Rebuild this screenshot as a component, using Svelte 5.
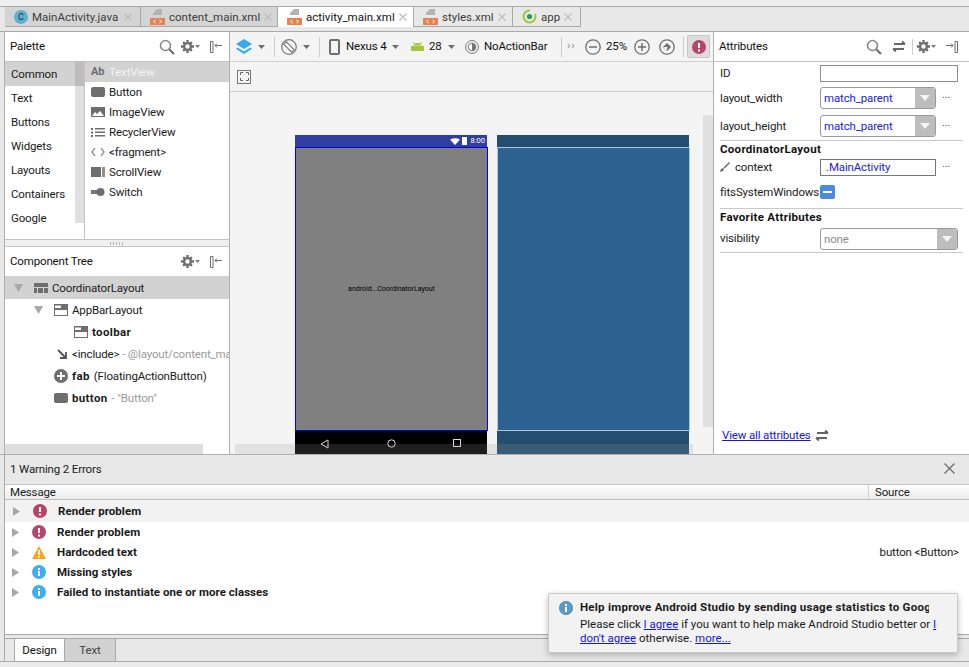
<script>
  const tabs = [
    { name: 'MainActivity.java', icon: 'c', w: 136 },
    { name: 'content_main.xml', icon: 'xml', w: 137 },
    { name: 'activity_main.xml', icon: 'xml', w: 136, active: true },
    { name: 'styles.xml', icon: 'xml', w: 99 },
    { name: 'app', icon: 'app', w: 68 },
  ];
  const categories = ['Common', 'Text', 'Buttons', 'Widgets', 'Layouts', 'Containers', 'Google'];
  const widgets = [
    { name: 'Button', icon: 'button' },
    { name: 'ImageView', icon: 'image' },
    { name: 'RecyclerView', icon: 'list' },
    { name: '<fragment>', icon: 'code' },
    { name: 'ScrollView', icon: 'scroll' },
    { name: 'Switch', icon: 'switch' },
  ];
  const messages = [
    { text: 'Render problem', kind: 'error', selected: true },
    { text: 'Render problem', kind: 'error' },
    { text: 'Hardcoded text', kind: 'warn', source: 'button <Button>' },
    { text: 'Missing styles', kind: 'info' },
    { text: 'Failed to instantiate one or more classes', kind: 'info' },
  ];
</script>

{#snippet caret()}
  <svg class="caret" width="7" height="4" viewBox="0 0 7 4"><path d="M0 0h7L3.500 4z" fill="#6e6e6e" /></svg>
{/snippet}

{#snippet gear()}
  <span class="gear">
    <svg width="13" height="13" viewBox="0 0 13 13"><circle cx="6.500" cy="6.500" r="3.400" fill="none" stroke="#6e6e6e" stroke-width="2.400" /><path d="M5.300 0h2.400v2.500H5.300zM5.300 10.500h2.400V13H5.300zM0 5.300h2.500v2.400H0zM10.500 5.300H13v2.400h-2.500zM1.300 3l1.700-1.700 1.600 1.600L2.900 4.600zM8.400 10.100l1.700-1.700 1.600 1.600-1.700 1.700zM1.300 10l1.600-1.600 1.700 1.700L3 11.700zM8.400 2.900L10 1.300 11.700 3l-1.600 1.600z" fill="#6e6e6e" /></svg>
    <svg width="5" height="3" viewBox="0 0 5 3"><path d="M0 0h5L2.500 3z" fill="#7a7a7a" /></svg>
  </span>
{/snippet}

{#snippet search()}
  <svg width="16" height="16" viewBox="0 0 16 16"><circle cx="6.500" cy="6.500" r="5" fill="none" stroke="#8a8a8a" stroke-width="1.600" /><path d="M10.200 10.200L15 15" stroke="#6e6e6e" stroke-width="2.200" /></svg>
{/snippet}

{#snippet hide()}
  <svg width="12" height="12" viewBox="0 0 12 12"><path d="M0.500 0.500h2.500v11H0.500z" fill="none" stroke="#6e6e6e" /><path d="M5 4.500h7M5 4.500l2-2M5 4.500l2 2" fill="none" stroke="#6e6e6e" /></svg>
{/snippet}

{#snippet swap()}
  <svg width="14" height="11" viewBox="0 0 14 11"><path d="M1 8h11M1 8l3 2.500M13 3H2M13 3l-3-2.500" fill="none" stroke="#666" stroke-width="1.800" /></svg>
{/snippet}

{#snippet tabIcon(kind)}
  {#if kind === 'c'}
    <span class="class-icon">C</span>
  {:else if kind === 'xml'}
    <svg width="15" height="16" viewBox="0 0 15 16"><path d="M7 0h5v6H3V4z" fill="#b3b3b3" /><rect y="9" width="15" height="7" fill="#e98150" /><path d="M5.500 11l-2 1.500 2 1.500M9.500 11l2 1.500-2 1.500" fill="none" stroke="#fff" /></svg>
  {:else}
    <svg width="15" height="15" viewBox="0 0 15 15"><circle cx="7.500" cy="7.500" r="6" fill="none" stroke="#a4c639" stroke-width="2" stroke-dasharray="28 6" /><circle cx="7.500" cy="7.500" r="2.600" fill="#1f9e5a" /></svg>
  {/if}
{/snippet}

{#snippet widgetIcon(kind)}
  <svg width="14" height="12" viewBox="0 0 14 12">
    {#if kind === 'button'}
      <rect y="1" width="14" height="10" rx="2" fill="#6e6e6e" />
    {:else if kind === 'image'}
      <rect y="1" width="14" height="10" fill="#6e6e6e" /><path d="M1 10l3-4 2 2 3-3 4 5z" fill="#fff" />
    {:else if kind === 'list'}
      <path d="M0 2h2v2H0zM4 2h10v1.500H4zM0 5.500h2v2H0zM4 5.500h10V7H4zM0 9h2v2H0zM4 9h10v1.500H4z" fill="#6e6e6e" />
    {:else if kind === 'code'}
      <path d="M4 2L1 6l3 4M10 2l3 4-3 4" fill="none" stroke="#777" stroke-width="1.200" />
    {:else if kind === 'scroll'}
      <path d="M0 1h10v10H0z" fill="#6e6e6e" /><path d="M11 1h3v10h-3z" fill="#8e8e8e" />
    {:else}
      <rect y="4" width="6" height="4" fill="#777" /><circle cx="9.500" cy="6" r="4" fill="#6e6e6e" />
    {/if}
  </svg>
{/snippet}

{#snippet msgIcon(kind)}
  {#if kind === 'error'}
    <svg width="14" height="14" viewBox="0 0 14 14"><circle cx="7" cy="7" r="7" fill="#b9446a" /><path d="M6 3h2v5H6zM6 9.500h2v2H6z" fill="#fff" /></svg>
  {:else if kind === 'warn'}
    <svg width="14" height="13" viewBox="0 0 14 13"><path d="M7 0l7 13H0z" fill="#f6a623" /><path d="M6.200 4h1.600v5H6.200zM6.200 10h1.600v1.600H6.200z" fill="#fff" /></svg>
  {:else}
    <svg width="14" height="14" viewBox="0 0 14 14"><circle cx="7" cy="7" r="7" fill="#40aef0" /><path d="M6 3h2v2H6zM6 6h2v5H6z" fill="#fff" /></svg>
  {/if}
{/snippet}

<div class="ide">
  <div class="topstrip"></div>
  <div class="tabs">
    {#each tabs as t}
      <div class="tab" class:active={t.active} style="width: {t.w}px">
        {@render tabIcon(t.icon)}
        <span>{t.name}</span>
        <svg class="x" width="8" height="8" viewBox="0 0 8 8"><path d="M0.500 0.500l7 7M7.500 0.500l-7 7" stroke="#bdbdbd" stroke-width="1.200" /></svg>
      </div>
    {/each}
  </div>

  <div class="work">
    <div class="left">
      <section class="palette">
        <header class="panel-head">
          <span class="title">Palette</span>
          <div class="tools">{@render search()}<span class="g6"></span>{@render gear()}<span class="g10"></span>{@render hide()}</div>
        </header>
        <div class="palette-body">
          <ul class="cats">
            {#each categories as c, i}
              <li class:sel={i === 0}>{c}</li>
            {/each}
            <div class="cat-scroll"><div></div></div>
          </ul>
          <ul class="widgets">
            <li class="sel"><b class="ab">Ab</b><span>TextView</span></li>
            {#each widgets as w}
              <li>{@render widgetIcon(w.icon)}<span>{w.name}</span></li>
            {/each}
          </ul>
        </div>
      </section>
      <div class="splitter"><i></i></div>
      <section class="tree">
        <header class="panel-head">
          <span class="title">Component Tree</span>
          <div class="tools">{@render gear()}<span class="g10"></span>{@render hide()}</div>
        </header>
        <div class="tree-row sel lvl0">
          <svg class="tw" width="9" height="8" viewBox="0 0 9 8"><path d="M0 0h9L4.500 8z" fill="#a8a8a8" /></svg>
          <svg width="14" height="10" viewBox="0 0 14 10"><path d="M0 0h14v4H0zM0 5h3v5H0zM4 5h5v5H4zM10 5h4v5h-4z" fill="#6e6e6e" /></svg>
          <span>CoordinatorLayout</span>
        </div>
        <div class="tree-row lvl1">
          <svg class="tw" width="9" height="8" viewBox="0 0 9 8"><path d="M0 0h9L4.500 8z" fill="#a8a8a8" /></svg>
          <svg width="14" height="12" viewBox="0 0 14 12"><rect width="14" height="12" fill="#6e6e6e" /><path d="M1 6h12v5H1zM1 1.500h6V4H1z" fill="#fff" /></svg>
          <span>AppBarLayout</span>
        </div>
        <div class="tree-row lvl2">
          <svg width="14" height="12" viewBox="0 0 14 12"><rect width="14" height="12" fill="#6e6e6e" /><path d="M1 6h12v5H1zM1 1.500h6V4H1z" fill="#fff" /></svg>
          <b>toolbar</b>
        </div>
        <div class="tree-row lvl3">
          <svg width="10" height="10" viewBox="0 0 10 10"><path d="M1 1l7 7M9 3v6H3" fill="none" stroke="#555" stroke-width="1.800" /></svg>
          <span class="clip">&lt;include&gt; <em>- @layout/content_main</em></span>
        </div>
        <div class="tree-row lvl4">
          <svg width="14" height="14" viewBox="0 0 14 14"><circle cx="7" cy="7" r="7" fill="#6e6e6e" /><path d="M6 3h2v3h3v2H8v3H6V8H3V6h3z" fill="#fff" /></svg>
          <b>fab</b><span class="sp">(FloatingActionButton)</span>
        </div>
        <div class="tree-row lvl4">
          <svg width="14" height="10" viewBox="0 0 14 10"><rect width="14" height="10" rx="2" fill="#6e6e6e" /></svg>
          <b>button</b><em class="sp">- "Button"</em>
        </div>
        <div class="hbar"></div>
      </section>
    </div>

    <main class="center">
      <div class="toolbar">
        <svg width="16" height="15" viewBox="0 0 16 15"><path d="M8 0l8 5-8 5-8-5z" fill="#3aa7ee" /><path d="M1.500 8.500L8 12.500l6.500-4L16 9.700 8 15 0 9.700z" fill="#3aa7ee" /></svg>
        {@render caret()}
        <i class="sep"></i>
        <svg width="16" height="16" viewBox="0 0 16 16"><circle cx="8" cy="8" r="7.300" fill="none" stroke="#777" stroke-width="1.200" /><path d="M2.800 5.300L5.300 2.800 13.200 10.700 10.700 13.200z" fill="#fff" stroke="#777" stroke-width="1.200" /></svg>
        {@render caret()}
        <i class="sep"></i>
        <svg class="ml" width="11" height="16" viewBox="0 0 11 16"><rect x="1" y="1" width="9" height="14" rx="1" fill="none" stroke="#6e6e6e" stroke-width="2" /></svg>
        <span class="t device">Nexus 4</span>
        {@render caret()}
        <svg class="droid" width="13" height="9" viewBox="0 0 13 9"><path d="M0 4h13v5H0zM2 3.500Q6.500 -2 11 3.500z" fill="#a4c639" /><path d="M2 0l2 2M11 0L9 2" stroke="#a4c639" /></svg>
        <span class="t api">28</span>
        {@render caret()}
        <svg class="theme" width="14" height="14" viewBox="0 0 14 14"><circle cx="7" cy="7" r="6.400" fill="none" stroke="#777" /><circle cx="7" cy="7" r="3.800" fill="#fff" stroke="#777" /><path d="M7 3.200a3.800 3.800 0 0 1 0 7.600z" fill="#777" /></svg>
        <span class="t noab">NoActionBar</span>
        <i class="sep wide"></i>
        <span class="more">››</span>
        <svg width="16" height="16" viewBox="0 0 16 16"><circle cx="8" cy="8" r="7.200" fill="none" stroke="#6e6e6e" stroke-width="1.300" /><path d="M4 8h8" stroke="#6e6e6e" stroke-width="1.500" /></svg>
        <span class="t zoom">25%</span>
        <svg width="16" height="16" viewBox="0 0 16 16"><circle cx="8" cy="8" r="7.200" fill="none" stroke="#6e6e6e" stroke-width="1.300" /><path d="M4 8h8M8 4v8" stroke="#6e6e6e" stroke-width="1.500" /></svg>
        <svg class="fit" width="16" height="16" viewBox="0 0 16 16"><circle cx="8" cy="8" r="7.200" fill="none" stroke="#6e6e6e" stroke-width="1.300" /><path d="M8 4l4 4-4 4-4-4z" fill="#6e6e6e" /><path d="M4.500 8.500l4-1-1 4z" fill="#fff" /></svg>
        <i class="sep last"></i>
        <span class="err-btn"><svg width="14" height="14" viewBox="0 0 14 14"><circle cx="7" cy="7" r="7" fill="#b9446a" /><path d="M6 3h2v5H6zM6 9.500h2v2H6z" fill="#fff" /></svg></span>
      </div>
      <div class="subbar">
        <span class="expand"><svg width="9" height="9" viewBox="0 0 9 9"><path d="M0.500 3V0.500H3M6 0.500h2.500V3M8.500 6v2.500H6M3 8.500H0.500V6" fill="none" stroke="#666" /></svg></span>
      </div>
      <div class="canvas">
        <div class="device-shot design">
          <div class="status">
            <svg width="10" height="7" viewBox="0 0 10 7"><path d="M0 1.500Q5 -1 10 1.500L5 7z" fill="#fff" /></svg>
            <i class="battery"></i>
            <span>8:00</span>
          </div>
          <div class="screen"><span>android...CoordinatorLayout</span></div>
          <div class="navbar">
            <svg width="9" height="10" viewBox="0 0 9 10"><path d="M8 1v8L1 5z" fill="none" stroke="#ddd" /></svg>
            <svg width="9" height="9" viewBox="0 0 9 9"><circle cx="4.500" cy="4.500" r="3.700" fill="none" stroke="#ddd" /></svg>
            <svg width="8" height="8" viewBox="0 0 8 8"><rect x="0.500" y="0.500" width="7" height="7" fill="none" stroke="#ddd" /></svg>
          </div>
        </div>
        <div class="device-shot blueprint">
          <div class="status"></div>
          <div class="screen"></div>
          <div class="navbar"></div>
        </div>
        <div class="vbar"></div>
        <div class="canvas-hbar"></div>
      </div>
    </main>

    <aside class="attrs">
      <header class="panel-head">
        <span class="title">Attributes</span>
        <div class="tools attr-tools">{@render search()}<span class="g10"></span>{@render swap()}<i class="sep short"></i>{@render gear()}<span class="g10"></span>
          <svg width="12" height="12" viewBox="0 0 12 12"><path d="M9 0.500h2.500v11H9z" fill="none" stroke="#6e6e6e" /><path d="M0 4.500h7M7 4.500l-2-2M7 4.500l-2 2" fill="none" stroke="#6e6e6e" /></svg>
        </div>
      </header>
      <div class="attr-row first"><label>ID</label><div class="input"></div></div>
      <div class="attr-row"><label>layout_width</label><div class="combo"><span>match_parent</span><b><i></i></b></div><span class="dots">...</span></div>
      <div class="attr-row"><label>layout_height</label><div class="combo"><span>match_parent</span><b><i></i></b></div><span class="dots">...</span></div>
      <div class="group">CoordinatorLayout</div>
      <div class="attr-row ctx">
        <label><svg width="10" height="10" viewBox="0 0 10 10"><path d="M0 10L1 7l2-1 1 1-1 2zM3.500 5.500L9 0l1 1-5.500 5.500z" fill="#666" /></svg>context</label>
        <div class="input val">.MainActivity</div><span class="dots">...</span>
      </div>
      <div class="attr-row fits"><label>fitsSystemWindows</label><span class="tri"><i></i></span></div>
      <div class="group fav">Favorite Attributes</div>
      <div class="attr-row vis"><label>visibility</label><div class="combo wide"><span>none</span><b><i></i></b></div></div>
      <div class="attr-foot"><a href="#all">View all attributes</a>{@render swap()}</div>
    </aside>
  </div>

  <section class="problems">
    <div class="prob-head">
      <span>1 Warning 2 Errors</span>
      <svg width="11" height="11" viewBox="0 0 11 11"><path d="M0.500 0.500l10 10M10.500 0.500l-10 10" stroke="#6e6e6e" stroke-width="1.300" /></svg>
    </div>
    <div class="prob-cols"><span>Message</span><span class="src">Source</span></div>
    <div class="prob-list">
      {#each messages as m}
        <div class="msg" class:selected={m.selected}>
          <svg width="7" height="9" viewBox="0 0 7 9"><path d="M0 0l7 4.500L0 9z" fill="#a6a6a6" /></svg>
          {@render msgIcon(m.kind)}
          <b>{m.text}</b>
          {#if m.source}<span class="msg-src">{m.source}</span>{/if}
        </div>
      {/each}
    </div>
    <div class="bottom-tabs">
      <div class="btab on">Design</div>
      <div class="btab">Text</div>
    </div>
  </section>
  <div class="bottom-strip"></div>

  <div class="balloon">
    <svg width="14" height="14" viewBox="0 0 14 14"><circle cx="7" cy="7" r="6.700" fill="#5a9bc9" stroke="#3d7aa8" stroke-width="0.600" /><path d="M6 3h2v2H6zM6 6h2v5H6z" fill="#fff" /></svg>
    <div class="balloon-text">
      <b>Help improve Android Studio by sending usage statistics to Google</b>
      <p>Please click <a href="#a">I agree</a> if you want to help make Android Studio better or <a href="#b">I<br />don't agree</a> otherwise. <a href="#c">more...</a></p>
    </div>
  </div>
</div>

<style>
  :global(body) { margin: 0; }
  * { box-sizing: border-box; }
  .ide {
    position: relative; width: 969px; height: 667px; overflow: hidden;
    display: flex; flex-direction: column; background: #e8e8e8;
    font: 11.500px/16px Roboto, "Open Sans", sans-serif; color: #1a1a1a; letter-spacing: -0.150px;
  }
  ul { list-style: none; margin: 0; padding: 0; }
  svg { flex: none; display: block; }
  .topstrip { height: 7px; flex: none; background: #efefef; border-bottom: 1px solid #a9a9a9; }
  .tabs { height: 25px; display: flex; padding-left: 5px; border-bottom: 1px solid #a9a9a9; background: #e8e8e8; flex: none; }
  .tab { height: 20px; display: flex; align-items: center; gap: 4px; padding-left: 9px; background: #d4d4d4; border-right: 1px solid #a9a9a9; border-bottom: 1px solid #a9a9a9; color: #3c3c3c; letter-spacing: 0; white-space: nowrap; }
  .tab.active { background: #fff; color: #111; border-bottom: none; }
  .tab .x { margin-left: auto; margin-right: 8px; }
  .tab:nth-child(n+4) { background: #e8e8e8; }
  .class-icon { width: 14px; height: 14px; flex: none; border-radius: 50%; background: #5db1cf; color: #234; font-size: 9px; line-height: 14px; text-align: center; }

  .work { height: 423px; flex: none; display: flex; border-bottom: 1px solid #b0b0b0; padding-left: 4px; }
  .left { width: 226px; flex: none; display: flex; flex-direction: column; background: #fff; border-left: 1px solid #b0b0b0; border-right: 1px solid #b0b0b0; }
  .panel-head { height: 30px; flex: none; display: flex; align-items: center; justify-content: space-between; padding: 0 7px 0 5px; background: #fff; border-bottom: 1px solid #c4c4c4; }
  .title { color: #111; margin-top: -2px; }
  .tools { display: flex; align-items: center; }
  .g6 { width: 6px; }
  .g10 { width: 10px; }
  .gear { display: flex; align-items: center; gap: 1px; }
  .palette { height: 207px; flex: none; display: flex; flex-direction: column; }
  .palette-body { flex: 1; display: flex; min-height: 0; }
  .cats { position: relative; width: 80px; flex: none; border-right: 1px solid #c4c4c4; }
  .cats li { height: 24px; padding-left: 6px; display: flex; align-items: center; }
  .cats li.sel { background: #d2d2d2; }
  .cat-scroll { position: absolute; top: 0; right: 0; width: 9px; height: 161px; background: #e0e0e0; }
  .cat-scroll div { height: 24px; background: #bdbdbd; }
  .widgets { flex: 1; }
  .widgets li { height: 20px; display: flex; align-items: center; gap: 4px; padding-left: 6px; }
  .widgets li.sel { background: #d2d2d2; color: #f4f4f4; }
  .ab { width: 14px; color: #6e6e6e; font-weight: 700; font-size: 11px; }
  .splitter { height: 8px; flex: none; background: #f0f0f0; border-top: 1px solid #c4c4c4; border-bottom: 1px solid #c4c4c4; display: flex; align-items: center; justify-content: center; }
  .splitter i { width: 15px; height: 3px; background: repeating-linear-gradient(90deg, #b5b5b5 0 1px, transparent 1px 3px); }
  .tree { position: relative; flex: 1; display: flex; flex-direction: column; }
  .tree .panel-head { border-bottom: none; height: 29px; }
  .tree-row { height: 22px; flex: none; display: flex; align-items: center; gap: 4px; white-space: nowrap; overflow: hidden; }
  .tree-row.sel { background: #d2d2d2; height: 23px; }
  .tree-row b { font-weight: 700; letter-spacing: 0.350px; }
  .tree-row em, .clip em { font-style: normal; color: #9a9a9a; }
  .lvl0 { padding-left: 9px; }
  .lvl0 .tw { margin-right: 7px; }
  .lvl1 { padding-left: 29px; }
  .lvl1 .tw { margin-right: 7px; }
  .lvl2 { padding-left: 69px; }
  .lvl3 { padding-left: 52px; }
  .lvl3 svg { margin-right: 1px; }
  .lvl4 { padding-left: 49px; }
  .hbar { position: absolute; left: 0; bottom: 0; width: 198px; height: 10px; background: #dedede; }

  .center { width: 484px; flex: none; display: flex; flex-direction: column; border-right: 1px solid #b0b0b0; background: #f4f4f4; }
  .toolbar { height: 30px; flex: none; display: flex; align-items: center; padding-left: 6px; background: #f4f4f4; border-bottom: 1px solid #cfcfcf; white-space: nowrap; }
  .caret { margin-left: 6px; }
  .sep { width: 1px; height: 20px; background: #cdcdcd; margin: 0 6px 0 9px; flex: none; }
  .sep.wide { margin: 0 5px 0 15px; }
  .sep.last { margin: 0 3px 0 8px; }
  .sep.short { margin: 0 4px 0 6px; height: 16px; }
  .ml { margin-left: 3px; }
  .t { color: #111; margin-top: -2px; }
  .device { margin-left: 6px; width: 40px; }
  .droid { margin-left: 12px; }
  .api { margin-left: 5px; width: 13px; }
  .theme { margin-left: 10px; }
  .noab { margin-left: 5px; width: 62px; }
  .more { color: #8a8a8a; width: 18px; margin-bottom: 2px; font-size: 11px; letter-spacing: 1px; }
  .zoom { margin: -2px 7px 0 5px; width: 21px; }
  .fit { margin-left: 9px; }
  .err-btn { width: 23px; height: 23px; display: flex; align-items: center; justify-content: center; background: #dcdcdc; border: 1px solid #c8c8c8; border-radius: 2px; }
  .subbar { height: 30px; flex: none; display: flex; align-items: center; padding-left: 7px; border-bottom: 1px solid #cfcfcf; }
  .expand { width: 14px; height: 14px; border: 1px solid #777; display: flex; align-items: center; justify-content: center; }
  .canvas { position: relative; flex: 1; background: #f4f4f4; }
  .device-shot { position: absolute; top: 43px; width: 193px; height: 319px; display: flex; flex-direction: column; }
  .design { left: 65px; }
  .blueprint { left: 267px; }
  .status { height: 12px; width: 192px; flex: none; display: flex; align-items: center; justify-content: flex-end; gap: 2px; background: #303f9f; padding-right: 2px; color: #fff; font-size: 7.500px; letter-spacing: 0; }
  .battery { width: 5px; height: 8px; background: #fff; display: block; margin-right: 2px; }
  .screen { height: 284px; flex: none; background: #808080; border: 1px solid #0000ff; display: flex; align-items: center; justify-content: center; color: #000; font-size: 7px; letter-spacing: 0; }
  .navbar { flex: 1; width: 192px; background: #000; display: flex; align-items: flex-start; justify-content: space-between; padding: 8px 26px 0 25px; }
  .blueprint .status { background: #234e70; }
  .blueprint .screen { background: #2e6290; border-color: #a9c8e2; }
  .blueprint .navbar { background: #234e70; }
  .vbar { position: absolute; right: 0; top: 23px; width: 10px; height: 312px; background: #e0e0e0; }
  .canvas-hbar { position: absolute; left: 5px; bottom: 0; width: 458px; height: 10px; background: rgba(150,150,150,0.2); }

  .attrs { flex: 1; display: flex; flex-direction: column; background: #fff; position: relative; }
  .attrs .panel-head { padding-left: 5px; padding-right: 11px; }
  .attr-row { display: flex; align-items: center; height: 28px; padding-left: 6px; flex: none; }
  .attr-row.first { height: 22px; }
  .attr-row label { width: 100px; flex: none; display: flex; align-items: center; gap: 5px; color: #222; }
  .input { width: 138px; height: 17px; border: 1px solid #8f8f8f; background: #fff; }
  .val { width: 116px; height: 17px; line-height: 15px; color: #2222dd; padding-left: 5px; border-color: #777; }
  .combo { position: relative; width: 116px; height: 22px; border: 1px solid #9a9a9a; border-radius: 3px; display: flex; align-items: center; padding-left: 3px; color: #2222dd; background: #fff; overflow: hidden; }
  .combo b { position: absolute; right: 0; top: 0; bottom: 0; width: 20px; background: #bdbdbd; display: flex; align-items: center; justify-content: center; }
  .combo i { border-left: 5px solid transparent; border-right: 5px solid transparent; border-top: 6px solid #f4f4f4; }
  .combo.wide { width: 138px; color: #8e8e8e; }
  .dots { margin-left: 6px; margin-bottom: 6px; color: #555; font-size: 11px; }
  .group { margin: 0 6px; padding-top: 0; height: 18px; border-top: 1px solid #c9c9c9; font-weight: 700; letter-spacing: 0.300px; flex: none; color: #111; }
  .ctx { height: 18px; }
  .fits { height: 32px; }
  .tri { width: 15px; height: 14px; border-radius: 2px; background: #4a8bdf; display: flex; align-items: center; justify-content: center; }
  .tri i { width: 9px; height: 2px; background: #fff; }
  .vis { height: 27px; border-bottom: 1px solid #c9c9c9; margin: 0 6px; padding: 0 0 1px; }
  .vis label { width: 100px; margin-top: -1px; }
  .attr-foot { margin-top: auto; height: 36px; padding: 0 0 2px 8px; display: flex; align-items: center; gap: 4px; }
  a { color: #1414ee; text-decoration: underline; }

  .problems { flex: none; height: 206px; display: flex; flex-direction: column; margin-left: 4px; border-left: 1px solid #a9a9a9; }
  .prob-head { height: 30px; flex: none; display: flex; align-items: center; justify-content: space-between; padding: 0 14px 2px 5px; background: #e8e8e8; border-bottom: 1px solid #c4c4c4; }
  .prob-cols { height: 15px; flex: none; display: flex; line-height: 14px; padding-left: 5px; background: linear-gradient(#fff, #ececec); border-bottom: 1px solid #bdbdbd; position: relative; }
  .src { position: absolute; left: 863px; top: 0; bottom: 0; padding-left: 6px; border-left: 1px solid #cfcfcf; }
  .prob-list { height: 135px; flex: none; background: #fff; border-bottom: 1px solid #a9a9a9; position: relative; }
  .msg { height: 20px; display: flex; align-items: center; padding-left: 7px; }
  .msg.selected { height: 22px; background: #f2f2f2; padding-left: 8px; }
  .msg > svg:nth-child(1) { margin-right: 13px; }
  .msg b { margin-left: 11px; font-weight: 700; letter-spacing: 0.050px; white-space: nowrap; }
  .msg-src { position: absolute; right: 10px; }
  .bottom-tabs { height: 23px; flex: none; display: flex; padding-left: 9px; margin-top: 3px; background: #e8e8e8; border-top: 1px solid #a9a9a9; }
  .btab { width: 51px; display: flex; align-items: center; justify-content: center; background: #d2d2d2; border-right: 1px solid #a9a9a9; color: #444; }
  .btab.on { background: #fff; color: #111; border-left: 1px solid #a9a9a9; border-right: 1px solid #a9a9a9; }
  .bottom-strip { flex: 1; background: #ececec; border-top: 1px solid #a9a9a9; }

  .balloon { position: absolute; left: 548px; top: 593px; width: 410px; height: 60px; background: #f2f2f2; border: 1px solid #c9c9c9; border-radius: 2px; box-shadow: 0 2px 6px rgba(0,0,0,0.25); display: flex; gap: 7px; padding: 5px 10px; }
  .balloon > svg { margin-top: 2px; }
  .balloon-text { width: 349px; }
  .balloon-text b { display: block; height: 16px; overflow: hidden; white-space: nowrap; font-weight: 700; letter-spacing: 0.250px; }
  .balloon-text p { margin: 2px 0 0; line-height: 14px; white-space: nowrap; letter-spacing: 0; }
</style>
